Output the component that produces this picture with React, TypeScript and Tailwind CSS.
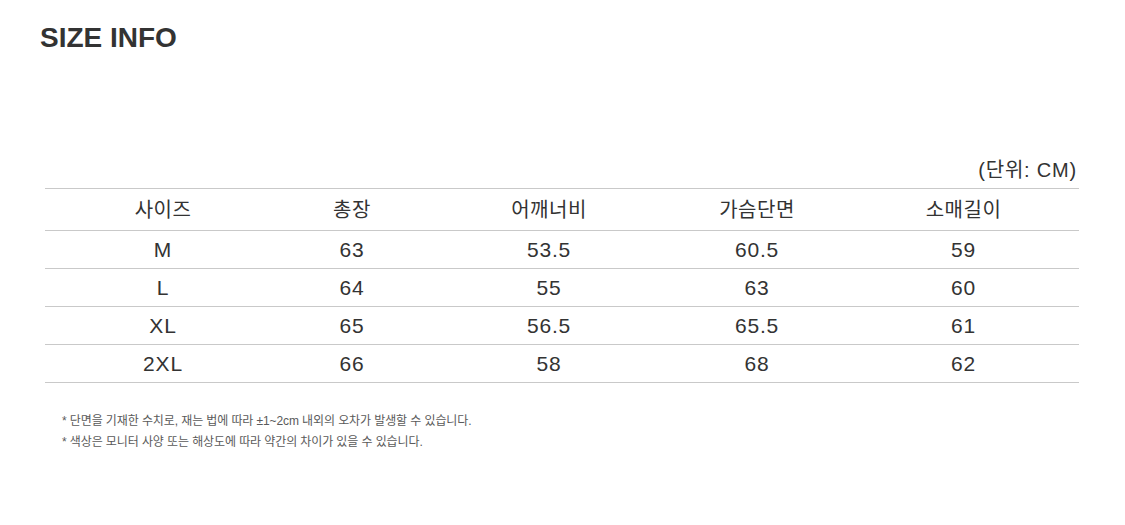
const rows = [
  ['M', '63', '53.5', '60.5', '59'],
  ['L', '64', '55', '63', '60'],
  ['XL', '65', '56.5', '65.5', '61'],
  ['2XL', '66', '58', '68', '62'],
]

const head = ['사이즈', '총장', '어깨너비', '가슴단면', '소매길이']

function Row({ cells, header }: { cells: string[]; header?: boolean }) {
  return (
    <div
      className={`grid grid-cols-[236px_142px_252px_164px_1fr] items-center border-b border-[#c9c9c9] text-[#333] ${
        header ? 'h-[42px] text-[20px] tracking-[0.5px]' : 'h-[38px] text-[21px] tracking-[0.8px]'
      }`}
    >
      {cells.map((c, i) => (
        <div key={i} className={i === 4 ? 'text-center pl-[9px]' : 'text-center'}>
          {c}
        </div>
      ))}
    </div>
  )
}

export default function App() {
  return (
    <div
      className="w-[1125px] h-[525px] bg-white relative"
      style={{ fontFamily: '"Liberation Sans", "Noto Sans CJK KR", sans-serif' }}
    >
      <div className="pl-[40px] pt-[22px]">
        <h1 className="text-[28px] font-bold text-[#333] leading-[32px]">SIZE INFO</h1>
      </div>
      <div className="pl-[45px] pr-[46px] mt-[104px]">
        <div className="text-right text-[20px] text-[#333] leading-[24px] pr-[2px] tracking-[0.8px]">(단위: CM)</div>
        <div className="mt-[6px] border-t border-[#c9c9c9]">
          <Row cells={head} header />
          {rows.map((r) => (
            <Row key={r[0]} cells={r} />
          ))}
        </div>
      </div>
      <div className="pl-[62px] mt-[28px] text-[12px] text-[#5a5a5a] leading-[21px] tracking-[-0.1px]">
        <p>* 단면을 기재한 수치로, 재는 법에 따라 ±1~2cm 내외의 오차가 발생할 수 있습니다.</p>
        <p>* 색상은 모니터 사양 또는 해상도에 따라 약간의 차이가 있을 수 있습니다.</p>
      </div>
    </div>
  )
}
